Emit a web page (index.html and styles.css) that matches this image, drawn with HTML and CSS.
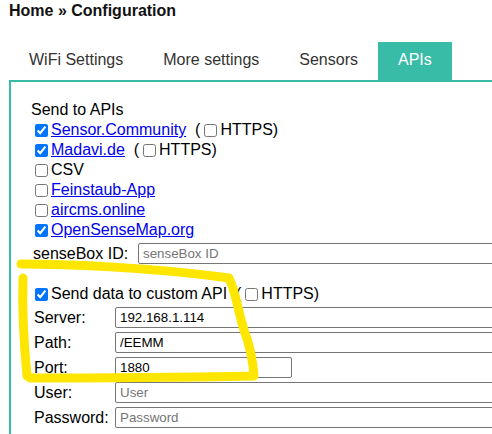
FILE: index.html
```html
<!DOCTYPE html>
<html>
<head>
<meta charset="utf-8">
<link rel="stylesheet" href="styles.css">
</head>
<body>
<div class="page">
  <div class="title">Home » Configuration</div>
  <nav class="tabs">
    <span class="tab">WiFi Settings</span>
    <span class="tab">More settings</span>
    <span class="tab">Sensors</span>
    <span class="tab active">APIs</span>
  </nav>
  <div class="panel">
    <div class="line">Send to APIs</div>
    <div class="line"><input type="checkbox" checked><a href="#">Sensor.Community</a>&nbsp; (<input type="checkbox">HTTPS)</div>
    <div class="line"><input type="checkbox" checked><a href="#">Madavi.de</a>&nbsp; (<input type="checkbox">HTTPS)</div>
    <div class="line"><input type="checkbox">CSV</div>
    <div class="line"><input type="checkbox"><a href="#">Feinstaub-App</a></div>
    <div class="line"><input type="checkbox"><a href="#">aircms.online</a></div>
    <div class="line"><input type="checkbox" checked><a href="#">OpenSenseMap.org</a></div>
    <div class="sbrow">
      <label class="sblabel">senseBox ID:</label>
      <input class="text wide" placeholder="senseBox ID">
    </div>
    <div class="line custom"><input type="checkbox" checked>Send data to custom API&nbsp; (<input type="checkbox">HTTPS)</div>
    <div class="fields">
      <label class="flabel">Server:</label><input class="text wide" value="192.168.1.114">
      <label class="flabel">Path:</label><input class="text wide" value="/EEMM">
      <label class="flabel">Port:</label><input class="text port" value="1880">
      <label class="flabel">User:</label><input class="text wide" placeholder="User">
      <label class="flabel">Password:</label><input class="text wide" placeholder="Password">
    </div>
  </div>
  <svg class="mark" width="492" height="434" viewBox="0 0 492 434">
    <path d="M 21 264 C 60 264, 150 267, 229 278 C 236 292, 238 312, 244 330 C 250 346, 253 362, 254 376 C 200 377, 120 378, 30 378" />
    <path d="M 23 278 C 22 310, 24 345, 27 376" />
  </svg>
</div>
</body>
</html>
```
FILE: styles.css
```css
html, body {
  margin: 0;
  padding: 0;
  overflow: hidden;
  background: #fff;
}
body {
  font-family: "Liberation Sans", Arial, sans-serif;
  font-size: 16px;
  color: #000;
}
.page {
  position: relative;
  width: 492px;
  height: 434px;
  overflow: hidden;
}
.title {
  font-weight: bold;
  line-height: 18px;
  padding: 2px 0 0 9px;
  color: #111;
}
.tabs {
  display: flex;
  margin: 22px 0 0 9px;
}
.tab {
  height: 38px;
  line-height: 36px;
  padding: 0 20px;
  color: #333;
}
.tab.active {
  background: #38bba7;
  color: #fff;
}
.panel {
  margin-left: 9px;
  border-top: 2px solid #38bba7;
  border-left: 2px solid #38bba7;
  padding: 18px 0 0 20px;
  height: 400px;
}
.line {
  line-height: 20px;
  height: 20px;
  white-space: nowrap;
}
.line input[type=checkbox] {
  width: 13px;
  height: 13px;
  margin: 3px 3px 3px 4px;
  vertical-align: -2px;
}
a {
  color: #0000ee;
  text-decoration: underline;
}
.sbrow {
  display: flex;
  align-items: center;
  height: 25px;
  padding-top: 1px;
}
.sblabel {
  width: 105px;
  padding-left: 2px;
  flex: none;
}
.custom {
  margin-top: 18px;
}
.fields {
  display: grid;
  grid-template-columns: 84px 400px;
  row-gap: 4px;
  align-items: center;
  padding-top: 3px;
}
.flabel {
  padding-left: 3px;
}
.text {
  box-sizing: border-box;
  height: 21px;
  border: 1px solid #767676;
  border-radius: 2px;
  padding: 0 4px;
  margin: 0;
  font-family: "Liberation Sans", Arial, sans-serif;
  font-size: 13.33px;
  color: #000;
  background: #fff;
}
.text::placeholder {
  color: #757575;
}
.wide {
  width: 400px;
  flex: none;
}
.port {
  width: 177px;
}
.mark {
  position: absolute;
  left: 0;
  top: 0;
  pointer-events: none;
}
.mark path {
  fill: none;
  stroke: #ffe600;
  stroke-width: 9;
  stroke-linecap: round;
  stroke-linejoin: round;
}
```
